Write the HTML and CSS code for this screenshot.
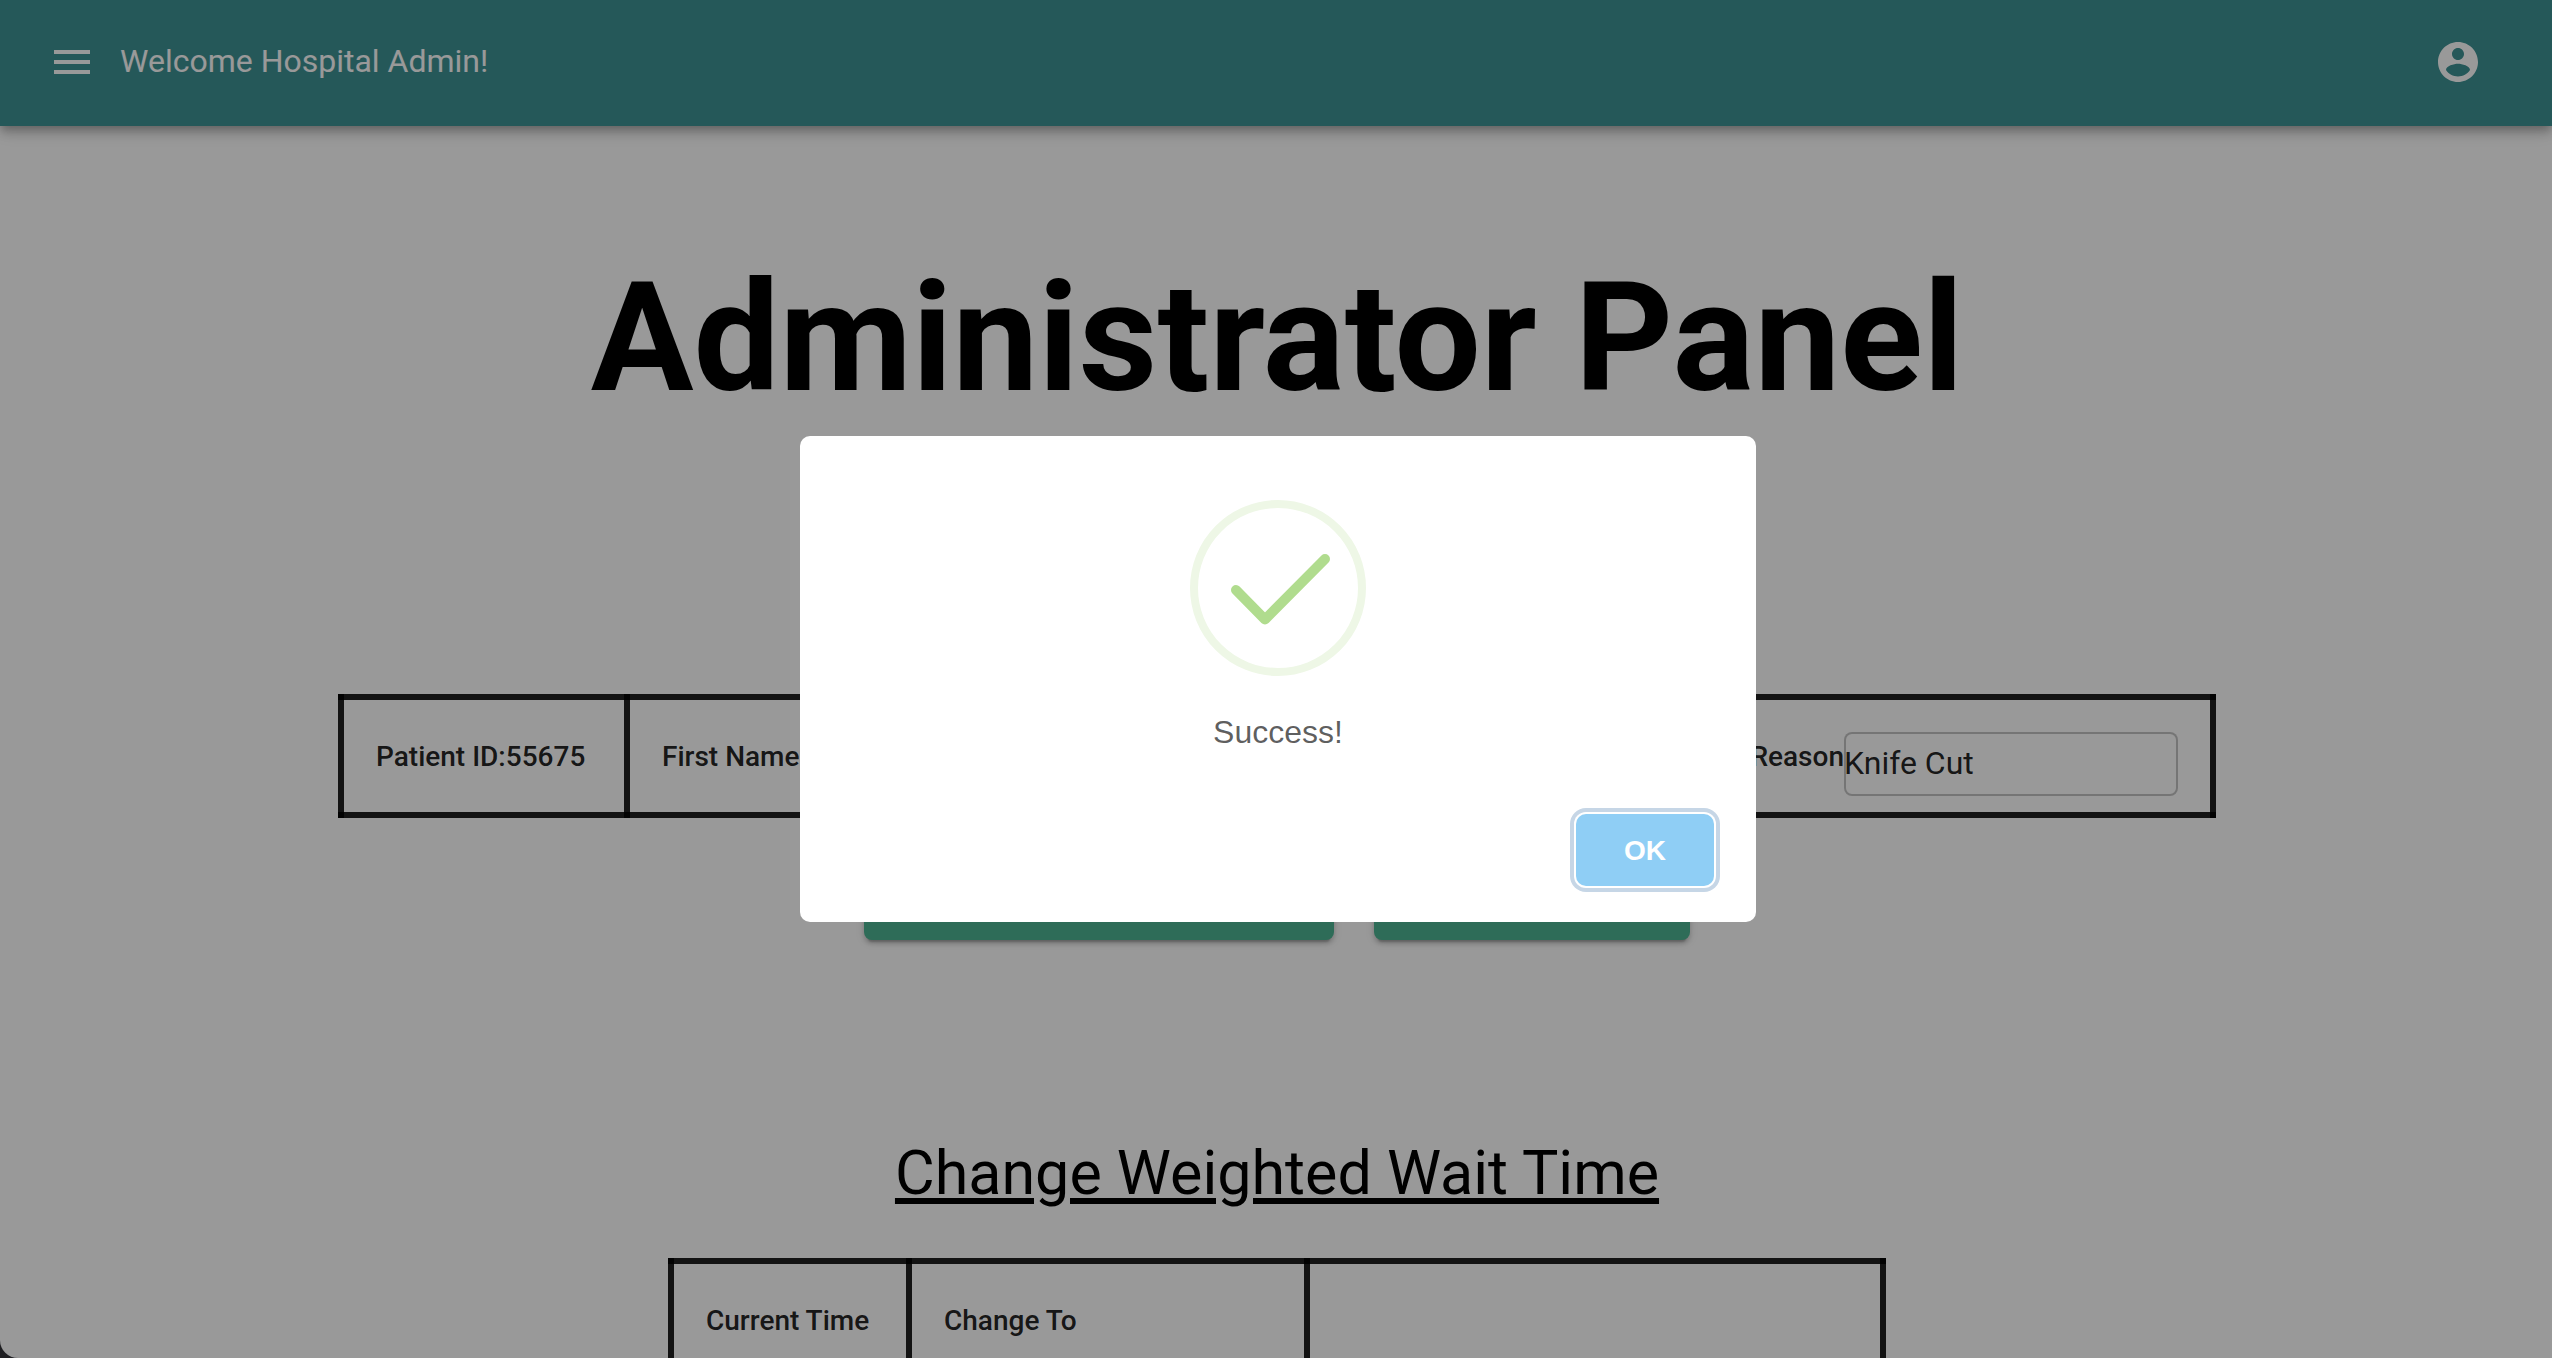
FILE: index.html
```html
<!DOCTYPE html>
<html lang="en">
<head>
  <meta charset="utf-8">
  <title>Administrator Panel</title>
  <link rel="stylesheet" href="styles.css">
</head>
<body>
  <div class="page">
    <header class="appbar">
      <button class="icon-button" type="button" aria-label="Open menu">
        <svg class="icon" viewBox="0 0 24 24"><path d="M3 18h18v-2H3v2zm0-5h18v-2H3v2zm0-7v2h18V6H3z"/></svg>
      </button>
      <span class="welcome">Welcome Hospital Admin!</span>
      <button class="icon-button" type="button" aria-label="Account">
        <svg class="icon" viewBox="0 0 24 24"><path d="M12 2C6.48 2 2 6.48 2 12s4.48 10 10 10 10-4.48 10-10S17.52 2 12 2zm0 3c1.66 0 3 1.34 3 3s-1.34 3-3 3-3-1.34-3-3 1.34-3 3-3zm0 14.2c-2.5 0-4.71-1.28-6-3.22.03-1.99 4-3.08 6-3.08 1.99 0 5.97 1.09 6 3.08-1.29 1.94-3.5 3.22-6 3.22z"/></svg>
      </button>
    </header>
    <main class="content">
      <h1 class="title">Administrator Panel</h1>
      <table class="grid patient">
        <tr>
          <th class="col-id">Patient ID:55675</th>
          <th>First Name</th>
          <th class="col-reason">
            <div class="field">
              <label for="reason">Reason</label>
              <input id="reason" class="input" type="text" value="Knife Cut">
            </div>
          </th>
        </tr>
      </table>
      <div class="actions">
        <button class="action action-wide" type="button" aria-label="Save changes"></button>
        <button class="action" type="button" aria-label="Delete"></button>
      </div>
      <h2 class="subtitle">Change Weighted Wait Time</h2>
      <table class="grid wait">
        <tr>
          <th class="col-current">Current Time</th>
          <th class="col-change">Change To</th>
          <th></th>
        </tr>
      </table>
    </main>
  </div>
  <div class="overlay">
    <div class="modal" role="dialog" aria-modal="true" aria-labelledby="message">
      <svg class="success" viewBox="0 0 176 176" aria-hidden="true">
        <circle cx="88" cy="88" r="84" fill="none" stroke="#eef7e6" stroke-width="8"/>
        <path d="M46 90L75 119.500L135 59" fill="none" stroke="#b0dc8e" stroke-width="10" stroke-linecap="round" stroke-linejoin="round"/>
      </svg>
      <p class="message" id="message">Success!</p>
      <button class="confirm" type="button">OK</button>
    </div>
  </div>
</body>
</html>
```
FILE: styles.css
```css
* {
  box-sizing: border-box;
}

body {
  margin: 0;
  background: #34343a;
  font-family: Roboto, "Liberation Sans", sans-serif;
  color: rgba(0, 0, 0, 0.87);
}

.page {
  height: 100vh;
  overflow: hidden;
  background: #fff;
  border-bottom-left-radius: 18px;
}

.appbar {
  display: flex;
  align-items: center;
  height: 126px;
  padding: 0 70px 2px 48px;
  background: #3e9395;
  color: #fff;
  box-shadow: 0 4px 8px -2px rgba(0, 0, 0, 0.2), 0 8px 10px rgba(0, 0, 0, 0.14), 0 2px 20px rgba(0, 0, 0, 0.12);
}

.icon-button {
  display: flex;
  padding: 0;
  border: 0;
  background: none;
  color: inherit;
}

.icon {
  width: 48px;
  height: 48px;
  fill: currentColor;
}

.welcome {
  flex: 1;
  padding: 0 24px 2px;
  font-size: 32px;
  line-height: 48px;
}

.content {
  display: flex;
  flex-direction: column;
  align-items: center;
  padding-left: 2px;
}

.title {
  margin: 122px 0 0;
  font-size: 153px;
  line-height: 180px;
  font-weight: 700;
  color: #000;
}

.grid {
  border-collapse: collapse;
  table-layout: fixed;
}

.grid th {
  height: 118px;
  padding: 2px 32px 0;
  border: 6px solid rgba(0, 0, 0, 0.87);
  font-size: 28px;
  line-height: 48px;
  font-weight: 500;
  text-align: left;
  white-space: nowrap;
}

.patient {
  width: 1878px;
  max-width: 100%;
  margin-top: 266px;
}

.col-id {
  width: 286px;
}

.grid .col-reason {
  width: 498px;
}

.field {
  display: flex;
  justify-content: flex-end;
  align-items: center;
}

.input {
  width: 334px;
  height: 64px;
  margin-top: 14px;
  padding: 0 0 2px;
  border: 0;
  border-radius: 8px;
  box-shadow: inset 0 0 0 2px rgba(0, 0, 0, 0.23);
  background: none;
  font: 400 32px/48px Roboto, "Liberation Sans", sans-serif;
  color: inherit;
}

.actions {
  display: flex;
  gap: 40px;
  margin-top: 48px;
}

.action {
  width: 316px;
  height: 74px;
  border: 0;
  border-radius: 8px;
  background: #4db493;
  box-shadow: 0 6px 2px -4px rgba(0, 0, 0, 0.2), 0 4px 4px rgba(0, 0, 0, 0.14), 0 2px 10px rgba(0, 0, 0, 0.12);
}

.action-wide {
  width: 470px;
}

.subtitle {
  margin: 197px 0 0;
  font-size: 61px;
  line-height: 72px;
  font-weight: 400;
  color: #000;
  text-decoration: underline;
  text-decoration-thickness: 6px;
  text-underline-offset: 4px;
}

.wait {
  width: 1218px;
  max-width: 100%;
  margin-top: 49px;
}

.col-current {
  width: 238px;
}

.grid .col-change {
  width: 398px;
}

.overlay {
  position: fixed;
  inset: 0;
  display: flex;
  align-items: center;
  justify-content: center;
  padding-left: 4px;
  background: rgba(0, 0, 0, 0.4);
}

.modal {
  display: flex;
  flex-direction: column;
  align-items: center;
  width: 956px;
  max-width: 90%;
  padding: 64px 42px 36px;
  border-radius: 10px;
  background: #fff;
}

.success {
  width: 176px;
  height: 176px;
}

.message {
  margin: 32px 0 58px;
  font: 400 32px/48px "Liberation Sans", sans-serif;
  color: rgba(0, 0, 0, 0.64);
}

.confirm {
  align-self: flex-end;
  width: 138px;
  height: 72px;
  padding: 2px 0 0;
  border: 0;
  border-radius: 10px;
  background: #8fcef5;
  box-shadow: 0 0 0 2px #fff, 0 0 0 6px #c6d6e6;
  font: 700 28px/40px "Liberation Sans", sans-serif;
  color: #fff;
}
```
